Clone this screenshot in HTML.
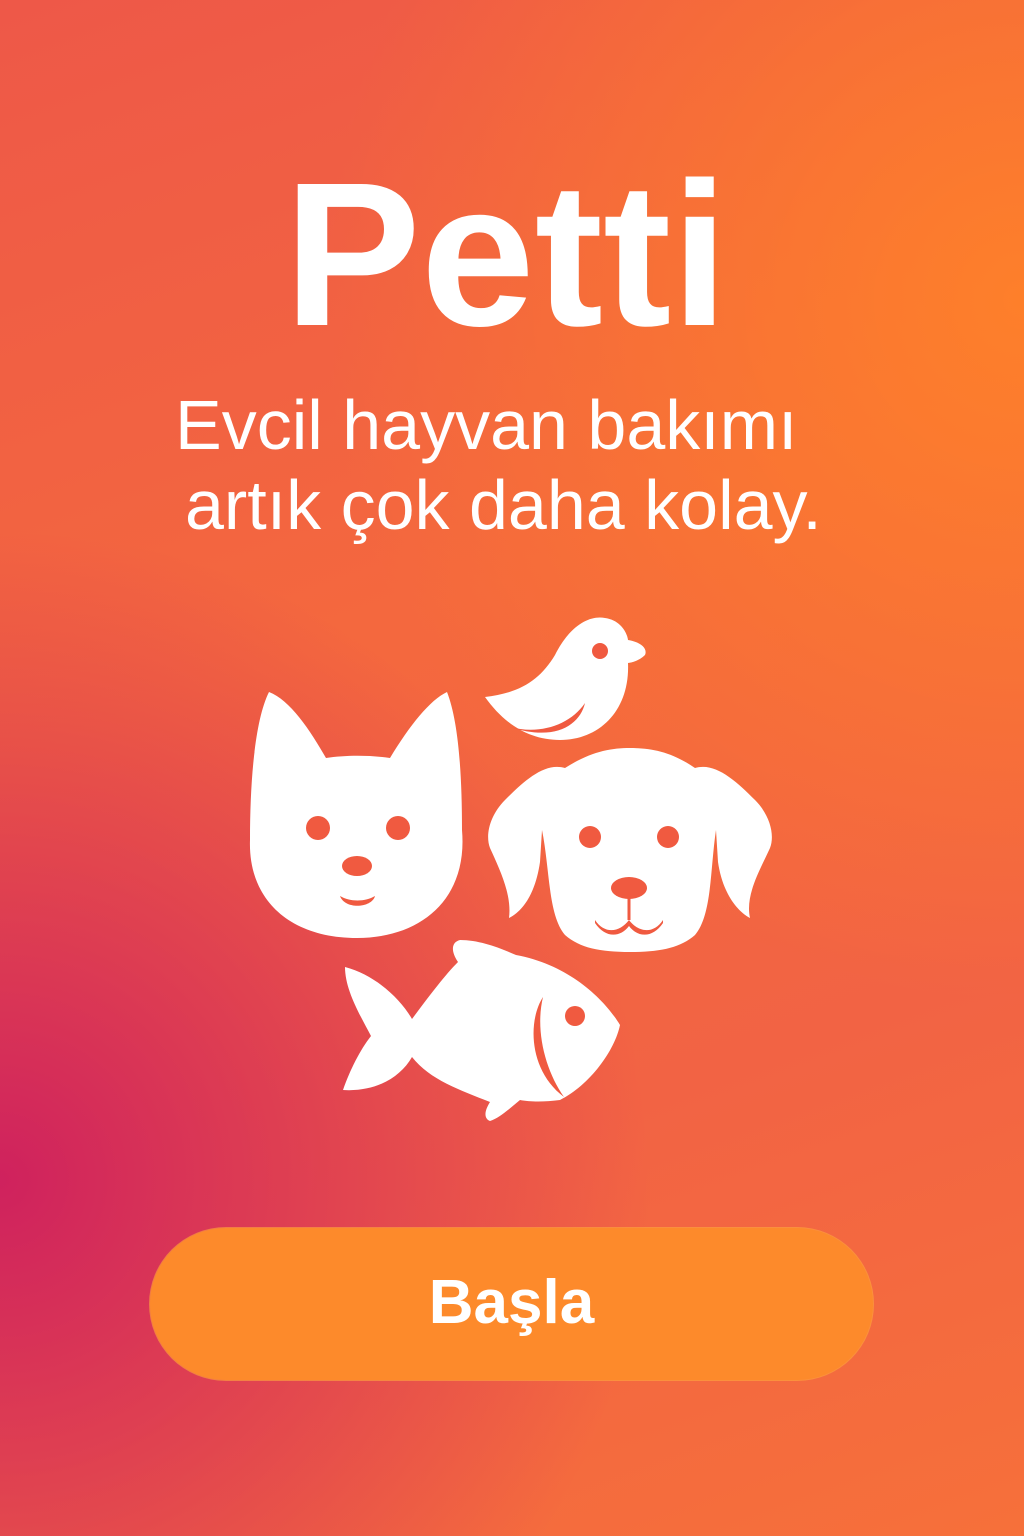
<!DOCTYPE html>
<html><head><meta charset="utf-8"><style>
html,body{margin:0;padding:0}
body{width:1024px;height:1536px;position:relative;overflow:hidden;font-family:"Liberation Sans",sans-serif;
background:
radial-gradient(ellipse 650px 650px at 0px 1180px, rgba(205,30,95,0.95), rgba(205,30,95,0) 100%),
radial-gradient(ellipse 700px 700px at 1024px 300px, rgba(255,130,40,0.9), rgba(255,130,40,0) 100%),
linear-gradient(160deg,#ee5848 0%,#f4683e 40%,#f26344 70%,#f6703a 100%);}
.t{position:absolute;color:#fff;white-space:nowrap}
.btn{position:absolute;left:150px;top:1228px;width:723px;height:152px;border-radius:76px;background:#fd8a2b;box-shadow:0 0 0 1px rgba(255,170,60,0.6)}
</style></head><body>
<div class="t" style="left:284px;top:152px;font-size:205px;font-weight:bold;letter-spacing:0px;line-height:1">Petti</div>
<div class="t" style="left:175px;top:390px;font-size:70px;line-height:1">Evcil hayvan bakımı</div>
<div class="t" style="left:185px;top:470px;font-size:70px;line-height:1">artık çok daha kolay.</div>
<svg style="position:absolute;left:0;top:0" width="1024" height="1536" viewBox="0 0 1024 1536">
<g fill="#fff">
<path d="M269,692 C290,700 310,730 326,758 C345,755 370,755 390,758 C410,725 430,700 447,692 C458,720 462,770 462,830 C468,900 420,938 357,938 C290,938 248,900 250,840 C250,780 255,720 269,692 Z"/>
<path d="M485,697 C520,693 540,680 555,655 C570,625 590,615 605,618 C620,620 627,632 628,640 C640,642 648,648 645,655 C640,660 632,663 628,663 C630,710 600,740 560,740 C530,740 505,725 485,697 Z"/>
<path d="M565,768 C590,752 610,748 630,748 C652,748 672,752 695,768 C715,762 735,780 755,800 C770,815 775,835 770,848 C760,870 745,895 750,918 C735,910 722,890 718,862 L716,830 C710,870 712,915 695,935 C680,948 660,952 630,952 C600,952 580,948 565,935 C548,915 550,870 542,830 L540,862 C536,890 525,910 509,918 C512,895 500,870 490,848 C485,835 490,815 505,800 C525,780 545,762 565,768 Z"/>
<path d="M345,967 C375,975 400,998 412,1019 C430,995 445,975 458,962 C450,950 452,942 460,940 C480,940 500,948 516,955 C570,965 605,1000 620,1025 C615,1050 590,1085 560,1100 C545,1102 530,1102 520,1100 C510,1108 500,1118 490,1121 C483,1118 485,1110 490,1102 C460,1090 430,1080 412,1057 C400,1078 375,1092 343,1090 C350,1070 360,1050 371,1036 C360,1015 345,990 345,967 Z"/>
</g>
<g fill="#f05a40">
<circle cx="318" cy="828" r="12"/><circle cx="398" cy="828" r="12"/>
<ellipse cx="357" cy="866" rx="15" ry="10"/>
<path d="M340,896 C350,902 365,902 375,896 C372,908 345,910 340,896 Z"/>
<circle cx="600" cy="651" r="8"/>
<path d="M510,727 C540,735 570,725 585,703 C580,725 555,742 510,727 Z"/>
<circle cx="590" cy="837" r="11"/><circle cx="668" cy="837" r="11"/>
<ellipse cx="629" cy="888" rx="18" ry="11"/>
<path d="M595,920 C605,935 620,932 629,920 C638,932 653,935 663,920 L663,923 C653,938 638,938 629,926 C620,938 605,938 595,923 Z"/>
<path d="M629,897 L629,920" stroke="#f05a40" stroke-width="3"/>
<circle cx="575" cy="1016" r="10"/>
<path d="M543,997 C528,1020 528,1070 564,1097 C545,1070 535,1030 543,997 Z"/>
</g>
</svg>
<div class="btn"></div>
<div class="t" style="left:150px;width:723px;top:1272px;text-align:center;font-size:62px;font-weight:bold;line-height:1">Başla</div>
</body></html>
